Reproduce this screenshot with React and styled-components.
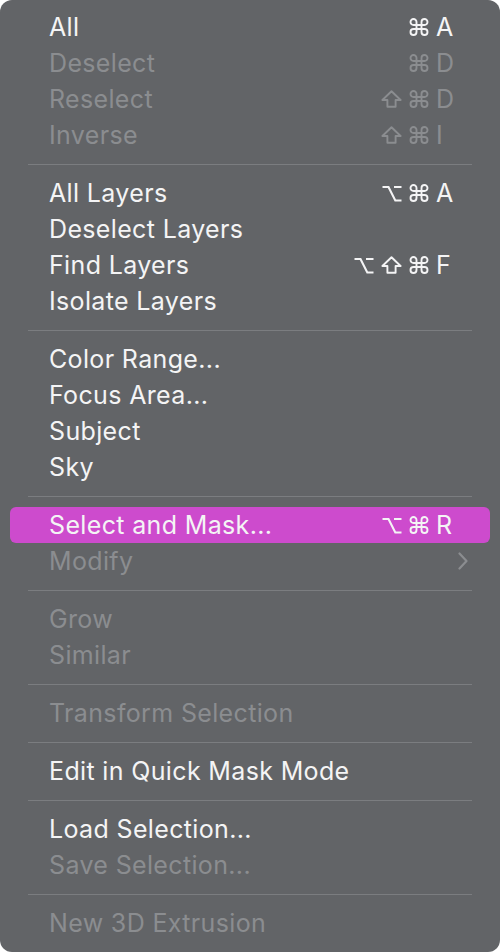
import React from 'react';
import styled, { createGlobalStyle } from 'styled-components';

const Global = createGlobalStyle`
    body {
        margin: 0;
        background: #ffffff;
        font-family: Inter, "Liberation Sans", sans-serif;
    }
`;

const Menu = styled.div`
    width: 500px;
    height: 952px;
    box-sizing: border-box;
    background-color: #626467;
    border-radius: 12px;
    padding: 9px 0 11px;
    display: flex;
    flex-direction: column;
`;

const Row = styled.div`
    height: 36px;
    margin: 0 10px;
    padding: 0 37px 0 39px;
    display: flex;
    align-items: center;
    justify-content: space-between;
    border-radius: 6px;
    font-size: 25px;
    letter-spacing: 0.35px;
    color: ${p => (p.$disabled ? '#8b8d90' : '#f4f4f5')};
    background-color: ${p => (p.$active ? '#cd4bcd' : 'transparent')};
`;

const Separator = styled.div`
    height: 22px;
    margin: 0 28px;
    display: flex;
    align-items: center;

    &::after {
        content: '';
        flex: 1;
        height: 1px;
        background-color: #7b7d80;
    }
`;

const Shortcut = styled.span`
    display: flex;
    align-items: center;
    gap: 7px;
`;

const Glyph = styled.svg`
    display: block;
    fill: none;
    stroke: currentColor;
    stroke-width: 1.9;
    stroke-linejoin: round;
`;

const Key = styled.span`
    width: 17px;
    text-align: left;
    letter-spacing: 0;
`;

const Chevron = styled.svg`
    display: block;
    width: 12px;
    height: 18px;
    margin-right: -16px;
`;

const Command = () => (
    <Glyph width="20" height="18" viewBox="0 0 20 18">
        <path d="M7.5 7 V4 A3 3 0 1 0 4.5 7 H15.5 A3 3 0 1 0 12.5 4 V14 A3 3 0 1 0 15.5 11 H4.5 A3 3 0 1 0 7.5 14 Z" />
    </Glyph>
);

const Shift = () => (
    <Glyph width="21" height="18" viewBox="0 0 21 18">
        <path d="M10.5 1.3 L19.6 10 H14.6 V16.8 H6.4 V10 H1.4 Z" />
    </Glyph>
);

const Option = () => (
    <Glyph width="20" height="17" viewBox="0 0 20 17" style={{ strokeLinejoin: 'miter' }}>
        <path d="M0.5 2 H6.5 L13.3 15.5 H19.5 M12 2 H19.5" strokeWidth="2.1" />
    </Glyph>
);

const mods = { '⌘': Command, '⇧': Shift, '⌥': Option };

const groups = [
    [
        ['All', '⌘', 'A'],
        ['Deselect', '⌘', 'D', true],
        ['Reselect', '⇧⌘', 'D', true],
        ['Inverse', '⇧⌘', 'I', true],
    ],
    [
        ['All Layers', '⌥⌘', 'A'],
        ['Deselect Layers'],
        ['Find Layers', '⌥⇧⌘', 'F'],
        ['Isolate Layers'],
    ],
    [
        ['Color Range...'],
        ['Focus Area...'],
        ['Subject'],
        ['Sky'],
    ],
    [
        ['Select and Mask...', '⌥⌘', 'R', false, true],
        ['Modify', '', null, true, false, true],
    ],
    [
        ['Grow', '', null, true],
        ['Similar', '', null, true],
    ],
    [
        ['Transform Selection', '', null, true],
    ],
    [
        ['Edit in Quick Mask Mode'],
    ],
    [
        ['Load Selection...'],
        ['Save Selection...', '', null, true],
    ],
    [
        ['New 3D Extrusion', '', null, true],
    ],
];

function App() {
    return (
        <>
            <Global />
            <Menu>
                {groups.map((items, gi) => (
                    <React.Fragment key={gi}>
                        {gi > 0 && <Separator />}
                        {items.map(([label, keys = '', key, disabled, active, sub]) => (
                            <Row key={label} $disabled={disabled} $active={active}>
                                <span>{label}</span>
                                {key && (
                                    <Shortcut>
                                        {[...keys].map((m, i) => {
                                            const Icon = mods[m];
                                            return <Icon key={i} />;
                                        })}
                                        <Key>{key}</Key>
                                    </Shortcut>
                                )}
                                {sub && (
                                    <Chevron viewBox="0 0 12 18">
                                        <path d="M2.5 1.5 L9.5 9 L2.5 16.5" fill="none" stroke="#8b8d90" strokeWidth="2.2" strokeLinecap="round" strokeLinejoin="round" />
                                    </Chevron>
                                )}
                            </Row>
                        ))}
                    </React.Fragment>
                ))}
            </Menu>
        </>
    );
}

export default App
